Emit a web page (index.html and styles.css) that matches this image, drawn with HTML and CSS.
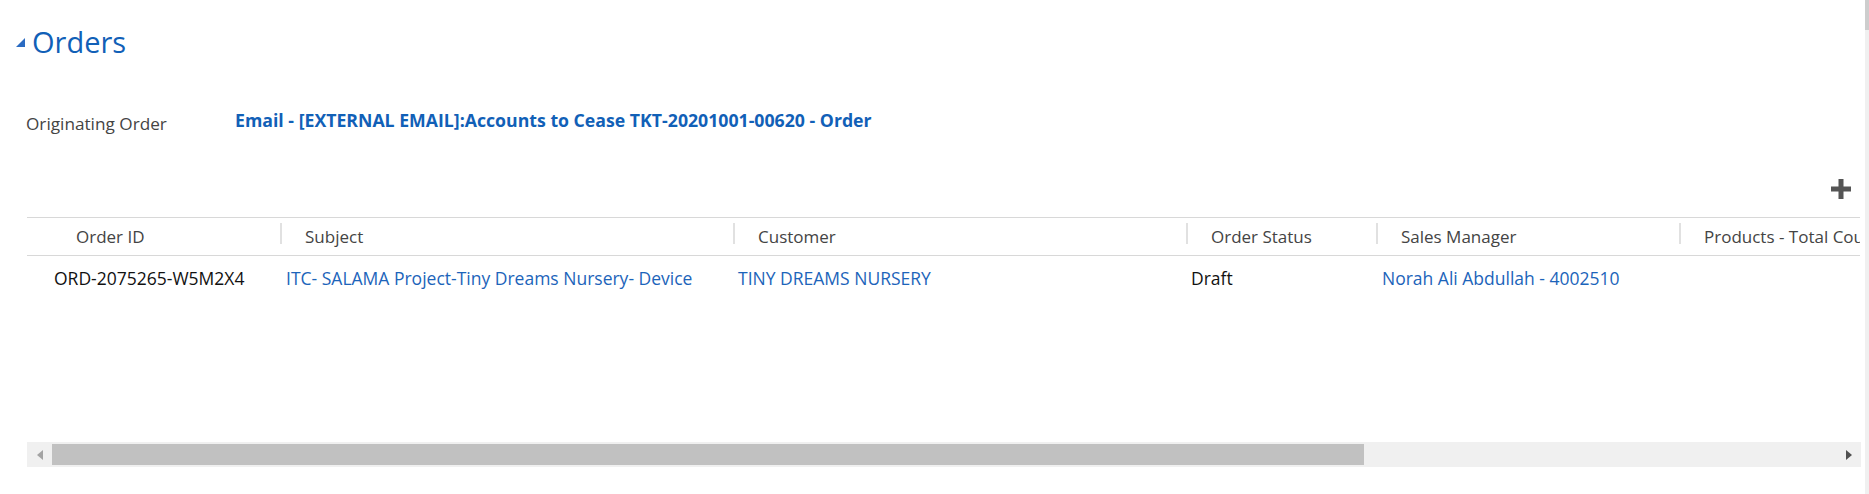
FILE: index.html
```html
<!DOCTYPE html>
<html lang="en">
<head>
<meta charset="utf-8">
<title>Orders</title>
<link rel="stylesheet" href="styles.css">
</head>
<body>
<div class="page">
  <div class="section-title">
    <span class="collapse-arrow"></span>
    <h2 class="title">Orders</h2>
  </div>

  <div class="field-row">
    <span class="field-label">Originating Order</span>
    <a class="field-link" href="#">Email - [EXTERNAL EMAIL]:Accounts to Cease TKT-20201001-00620 - Order</a>
  </div>

  <div class="toolbar">
    <svg class="add-icon" width="20" height="20" viewBox="0 0 20 20" aria-label="Add">
      <rect x="7.5" y="0" width="5" height="20" fill="#555"/>
      <rect x="0" y="7.5" width="20" height="5" fill="#555"/>
    </svg>
  </div>

  <div class="grid">
    <div class="grid-head">
      <div class="hcell first"><span class="htext">Order ID</span></div>
      <div class="hcell"><span class="sep"></span><span class="htext">Subject</span></div>
      <div class="hcell"><span class="sep"></span><span class="htext">Customer</span></div>
      <div class="hcell"><span class="sep"></span><span class="htext">Order Status</span></div>
      <div class="hcell"><span class="sep"></span><span class="htext">Sales Manager</span></div>
      <div class="hcell"><span class="sep"></span><span class="htext">Products - Total Count</span></div>
    </div>
    <div class="grid-body">
      <div class="grid-row">
        <div class="cell first">ORD-2075265-W5M2X4</div>
        <div class="cell"><a class="link" href="#">ITC- SALAMA Project-Tiny Dreams Nursery- Device</a></div>
        <div class="cell c5"><a class="link" href="#">TINY DREAMS NURSERY</a></div>
        <div class="cell c5">Draft</div>
        <div class="cell"><a class="link" href="#">Norah Ali Abdullah - 4002510</a></div>
        <div class="cell"></div>
      </div>
    </div>
  </div>

  <div class="hscroll">
    <div class="hs-btn"><span class="arrow-left"></span></div>
    <div class="hs-track"><div class="hs-thumb"></div></div>
    <div class="hs-btn"><span class="arrow-right"></span></div>
  </div>
</div>
<div class="vscroll"><div class="vs-thumb"></div></div>
</body>
</html>
```

FILE: styles.css
```css
html, body {
  margin: 0;
  padding: 0;
  background: #ffffff;
}

body {
  font-family: "Open Sans", "Noto Sans", sans-serif;
  font-size: 17px;
  color: #444444;
  overflow: hidden;
}

.page {
  padding: 23px 9px 0 27px;
  width: 1833px;
}

.section-title {
  display: flex;
  align-items: center;
  margin-left: -11px;
  height: 38px;
}

.collapse-arrow {
  width: 0;
  height: 0;
  border-left: 9px solid transparent;
  border-bottom: 9px solid #2a6bc2;
  margin-right: 7px;
}

.title {
  margin: 0;
  font-size: 29px;
  font-weight: 400;
  line-height: 38px;
  color: #1160b7;
}

.field-row {
  display: flex;
  align-items: flex-start;
  margin-top: 48px;
}

.field-label {
  width: 209px;
  flex: none;
  padding-top: 3px;
  line-height: 23px;
  font-size: 17.2px;
  color: #444444;
  margin-left: -1px;
}

.field-link {
  font-size: 17.7px;
  font-weight: 700;
  line-height: 23px;
  color: #1160b7;
  text-decoration: none;
}

.toolbar {
  display: flex;
  justify-content: flex-end;
  margin-top: 44px;
  height: 20px;
}

.add-icon {
  display: block;
  margin-right: 9px;
}

.grid {
  margin-top: 18px;
  width: 1833px;
  overflow: hidden;
  border-top: 1px solid #d8d8d8;
}

.grid-head,
.grid-row {
  display: grid;
  grid-template-columns: 253px 453px 453px 190px 303px 400px;
}

.grid-head {
  border-bottom: 1px solid #d8d8d8;
  height: 37px;
  width: 2052px;
}

.hcell {
  display: flex;
  align-items: flex-start;
  white-space: nowrap;
  overflow: hidden;
}

.hcell.first {
  padding-left: 49px;
}

.sep {
  width: 2px;
  height: 21px;
  margin-top: 5px;
  margin-right: 23px;
  background: #e1e1e1;
  flex: none;
}

.htext {
  padding-top: 7px;
  line-height: 23px;
  color: #444444;
}

.grid-body {
  height: 186px;
}

.grid-row {
  width: 2052px;
  height: 48px;
}

.cell {
  padding-top: 11px;
  padding-left: 6px;
  line-height: 23px;
  font-size: 17.5px;
  color: #111111;
  white-space: nowrap;
  overflow: hidden;
}

.cell.c5 {
  padding-left: 5px;
}

.cell.first {
  padding-left: 27px;
}

.link {
  color: #1c64ba;
  text-decoration: none;
}

.hscroll {
  display: flex;
  width: 1834px;
  height: 25px;
  background: #f0f0f0;
}

.hs-btn {
  width: 25px;
  flex: none;
  display: flex;
  align-items: center;
  justify-content: center;
}

.hs-track {
  flex: 1;
  display: flex;
  padding: 2px 0;
}

.hs-thumb {
  width: 1312px;
  background: #c1c1c1;
}

.arrow-left {
  width: 0;
  height: 0;
  border-top: 5.5px solid transparent;
  border-bottom: 5.5px solid transparent;
  border-right: 6px solid #a3a3a3;
}

.arrow-right {
  width: 0;
  height: 0;
  border-top: 5.5px solid transparent;
  border-bottom: 5.5px solid transparent;
  border-left: 6px solid #505050;
}

.vscroll {
  position: fixed;
  top: 0;
  right: 0;
  width: 4px;
  height: 100%;
  background: #f0f0f0;
}

.vs-thumb {
  height: 30px;
  background: #cdcdcd;
}
```
